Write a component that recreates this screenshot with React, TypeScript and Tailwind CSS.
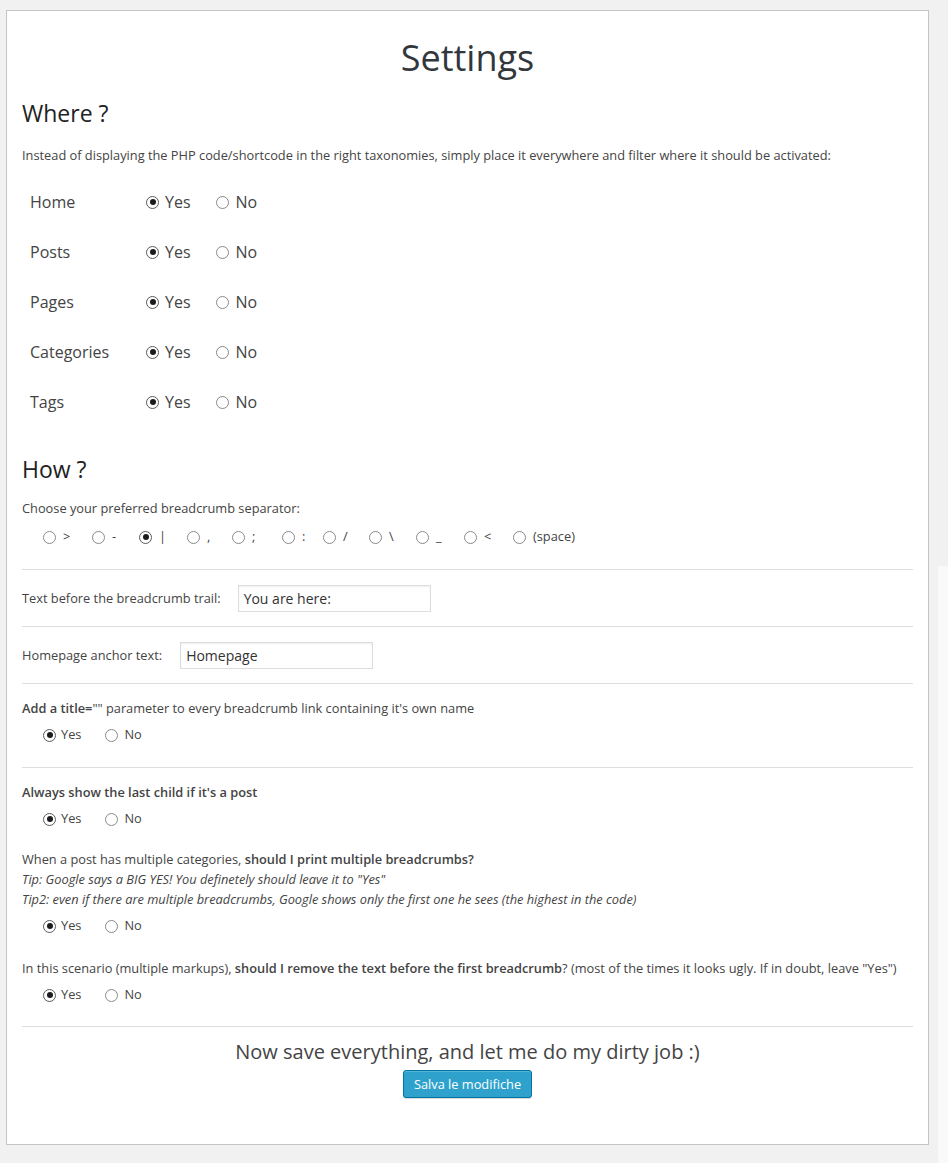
import React from "react";

function Radio({ checked }: { checked?: boolean }) {
  return (
    <span
      className={
        "inline-flex w-[13px] h-[13px] shrink-0 items-center justify-center rounded-full border bg-white " +
        (checked ? "border-[#5a5a5a]" : "border-[#8a8a8a]")
      }
    >
      {checked ? <span className="block w-[6px] h-[6px] rounded-full bg-[#1b1b1b]" /> : null}
    </span>
  );
}

function YesNoSmall() {
  return (
    <div className="mt-[7px] h-[20px] flex items-center pl-[21px] text-[12.8px] text-[#444]">
      <span className="flex items-center">
        <Radio checked />
        <span className="ml-[5px]">Yes</span>
      </span>
      <span className="flex items-center ml-[24px]">
        <Radio />
        <span className="ml-[6px]">No</span>
      </span>
    </div>
  );
}

const whereRows = ["Home", "Posts", "Pages", "Categories", "Tags"];

const separators: { label: string; w: string; checked?: boolean }[] = [
  { label: ">", w: "w-[49px]" },
  { label: "-", w: "w-[47px]" },
  { label: "|", w: "w-[48px]", checked: true },
  { label: ",", w: "w-[45px]" },
  { label: ";", w: "w-[50px]" },
  { label: ":", w: "w-[41px]" },
  { label: "/", w: "w-[46px]" },
  { label: "\\", w: "w-[47px]" },
  { label: "_", w: "w-[48px]" },
  { label: "<", w: "w-[49px]" },
  { label: "(space)", w: "w-[70px]" },
];

export default function App() {
  return (
    <div
      className="min-h-[1163px] bg-[#f1f1f1] flex"
      style={{ fontFamily: '"Open Sans", "Noto Sans", sans-serif' }}
    >
      <div className="ml-[6px] mt-[10px] mb-[18px] w-[923px] shrink-0 border border-[#c4c4c4] bg-white px-[15px] pb-[46px] text-[#444]">
        <h1 className="pt-[27px] leading-[40px] text-[36px] text-center text-[#32373c]">Settings</h1>

        <h2 className="mt-[20px] leading-[30px] text-[23px] text-[#222]">Where ?</h2>
        <p className="mt-[17px] leading-[20px] text-[12.8px]">
          Instead of displaying the PHP code/shortcode in the right taxonomies, simply place it everywhere and filter where it should be activated:
        </p>

        <div className="mt-[12px] flex flex-col">
          {whereRows.map((r) => (
            <div key={r} className="h-[50px] flex items-center pl-[8px] text-[16px] text-[#444]">
              <span className="w-[116px]">{r}</span>
              <span className="flex items-center">
                <Radio checked />
                <span className="ml-[6px]">Yes</span>
              </span>
              <span className="flex items-center ml-[25px]">
                <Radio />
                <span className="ml-[7px]">No</span>
              </span>
            </div>
          ))}
        </div>

        <h2 className="mt-[27px] leading-[30px] text-[23px] text-[#222]">How ?</h2>
        <p className="mt-[14px] leading-[20px] text-[12.8px]">Choose your preferred breadcrumb separator:</p>
        <div className="mt-[9px] h-[20px] flex items-center pl-[21px] text-[12.8px]">
          {separators.map((s) => (
            <span key={s.label} className={"flex items-center " + s.w}>
              <Radio checked={s.checked} />
              <span className="ml-[7px]">{s.label}</span>
            </span>
          ))}
        </div>

        <div className="mt-[22px] border-t border-[#dddddd]" />

        <div className="mt-[15px] h-[27px] flex items-center text-[12.8px]">
          <span>Text before the breadcrumb trail:</span>
          <div className="ml-[17px] w-[193px] h-[27px] flex items-center border border-[#dddddd] shadow-[inset_0_1px_2px_rgba(0,0,0,0.07)] pl-[5px] text-[14px] text-[#333]">
            You are here:
          </div>
        </div>

        <div className="mt-[14px] border-t border-[#dddddd]" />

        <div className="mt-[15px] h-[27px] flex items-center text-[12.8px]">
          <span>Homepage anchor text:</span>
          <div className="ml-[18px] w-[193px] h-[27px] flex items-center border border-[#dddddd] shadow-[inset_0_1px_2px_rgba(0,0,0,0.07)] pl-[5px] text-[14px] text-[#333]">
            Homepage
          </div>
        </div>

        <div className="mt-[14px] border-t border-[#dddddd]" />

        <p className="mt-[14px] leading-[20px] text-[12.8px]">
          <span className="font-semibold">Add a title=</span>"" parameter to every breadcrumb link containing it's own name
        </p>
        <YesNoSmall />

        <div className="mt-[22px] border-t border-[#dddddd]" />

        <p className="mt-[14px] leading-[20px] text-[12.8px] font-semibold">Always show the last child if it's a post</p>
        <div className="mt-[1px]">
          <YesNoSmall />
        </div>

        <p className="mt-[20px] leading-[20px] text-[12.8px]">
          When a post has multiple categories, <span className="font-semibold">should I print multiple breadcrumbs?</span>
        </p>
        <p className="leading-[20px] text-[12.8px] italic">Tip: Google says a BIG YES! You definetely should leave it to "Yes"</p>
        <p className="leading-[20px] text-[12.8px] italic">
          Tip2: even if there are multiple breadcrumbs, Google shows only the first one he sees (the highest in the code)
        </p>
        <YesNoSmall />

        <p className="mt-[22px] leading-[20px] text-[12.8px]">
          In this scenario (multiple markups), <span className="font-semibold">should I remove the text before the first breadcrumb</span>? (most of the times it looks ugly. If in doubt, leave "Yes")
        </p>
        <YesNoSmall />

        <div className="mt-[21px] border-t border-[#dddddd]" />

        <p className="mt-[11px] leading-[28px] text-[20px] text-center text-[#444]">
          Now save everything, and let me do my dirty job :)
        </p>
        <div className="mt-[4px] flex justify-center">
          <button
            type="button"
            className="h-[28px] px-[10px] rounded-[3px] border border-[#0074a2] bg-[#2ea2cc] text-white text-[12.8px] leading-[26px] shadow-[inset_0_1px_0_rgba(120,200,230,0.5),0_1px_0_rgba(0,0,0,0.15)]"
          >
            Salva le modifiche
          </button>
        </div>
      </div>
      <div className="ml-[9px] mt-[566px] flex-1 bg-[#f9f9f9]" />
    </div>
  );
}
